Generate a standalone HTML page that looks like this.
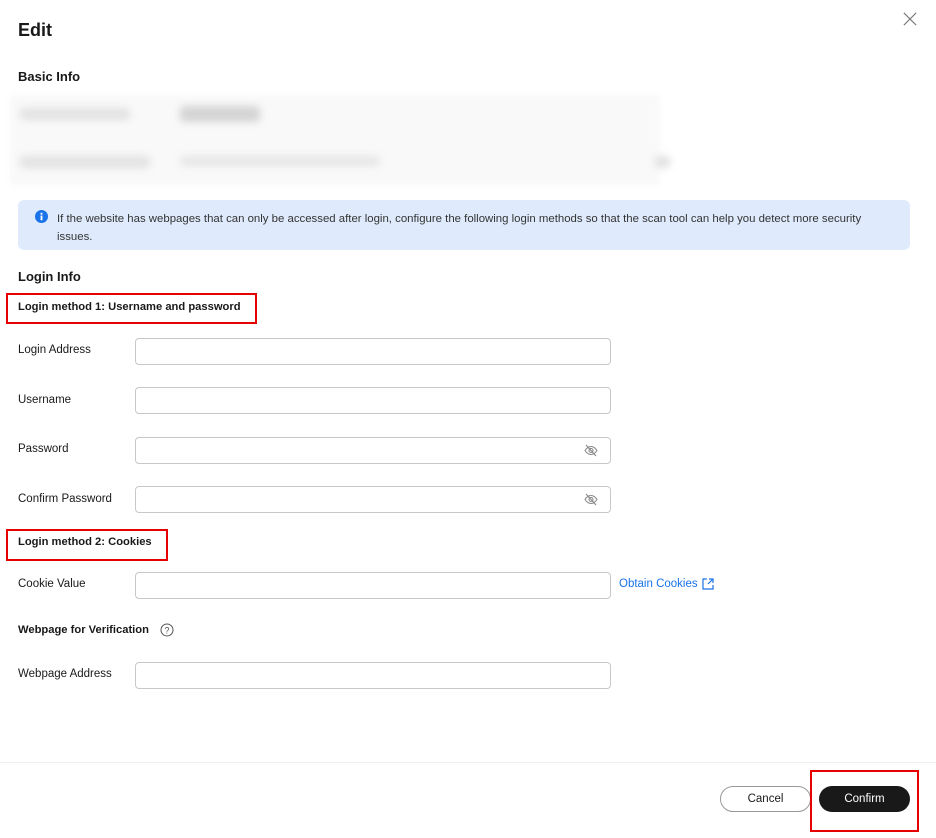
<!DOCTYPE html>
<html><head><style>
body{margin:0;width:936px;height:838px;background:#fff;font-family:"Liberation Sans",sans-serif;color:#191919;position:relative;overflow:hidden}
.a{position:absolute}
.t{font-size:11.5px}
.b{font-weight:bold}
.bt{font-size:11.2px;font-weight:bold}
.in{position:absolute;left:135px;width:474px;height:25px;border:1px solid #c8c8c8;border-radius:4px;background:#fff}
.red{position:absolute;border:2px solid #e60000}
.blur{position:absolute;background:#d8d8d8;filter:blur(4px);border-radius:4px}
.eye{position:absolute;right:12px;top:6px}
</style></head><body>
<div class="a b" style="left:18px;top:20px;font-size:18px">Edit</div>
<svg class="a" style="left:903px;top:12px" width="14" height="14" viewBox="0 0 16 16"><path d="M1 1L15 15M15 1L1 15" stroke="#777" stroke-width="1.4"/></svg>
<div class="a b" style="left:18px;top:69px;font-size:13px">Basic Info</div>
<div class="a" style="left:10px;top:95px;width:650px;height:90px;background:#f9f9f9;filter:blur(3px)"></div>
<div class="blur" style="left:20px;top:108px;width:110px;height:12px;background:#e2e2e2"></div>
<div class="blur" style="left:180px;top:106px;width:80px;height:16px;background:#d4d4d4"></div>
<div class="blur" style="left:20px;top:156px;width:130px;height:12px;background:#e2e2e2"></div>
<div class="blur" style="left:180px;top:156px;width:200px;height:10px;background:#e6e6e6"></div>
<div class="blur" style="left:655px;top:156px;width:15px;height:12px;background:#e0e0e0"></div>
<div class="a" style="left:18px;top:200px;width:892px;height:50px;background:#dfebfc;border-radius:6px"></div>
<svg class="a" style="left:35px;top:210px" width="13" height="13" viewBox="0 0 14 14"><circle cx="7" cy="7" r="7" fill="#1a73e8"/><rect x="6" y="6" width="2" height="5" fill="#fff"/><rect x="6" y="3" width="2" height="2" fill="#fff"/></svg>
<div class="a" style="left:57px;top:210px;width:840px;line-height:18px;font-size:11.4px;color:#333">If the website has webpages that can only be accessed after login, configure the following login methods so that the scan tool can help you detect more security issues.</div>
<div class="a b" style="left:18px;top:269px;font-size:13px">Login Info</div>
<div class="a bt" style="left:18px;top:301px">Login method 1: Username and password</div>
<div class="red" style="left:6px;top:293px;width:247px;height:27px"></div>
<div class="a t" style="left:18px;top:344px">Login Address</div><div class="in" style="top:338px"></div>
<div class="a t" style="left:18px;top:394px">Username</div><div class="in" style="top:387px"></div>
<div class="a t" style="left:18px;top:443px">Password</div><div class="in" style="top:437px"><svg class="eye" width="14" height="13" viewBox="0 0 14 13"><path d="M1 6.5C3 3.5 5 2.5 7 2.5S11 3.5 13 6.5C11 9.5 9 10.5 7 10.5S3 9.5 1 6.5Z" fill="none" stroke="#888" stroke-width="1.1"/><circle cx="7" cy="6.5" r="2" fill="none" stroke="#888" stroke-width="1.1"/><path d="M2 1L12 12" stroke="#888" stroke-width="1.1"/></svg></div>
<div class="a t" style="left:18px;top:493px">Confirm Password</div><div class="in" style="top:486px"><svg class="eye" width="14" height="13" viewBox="0 0 14 13"><path d="M1 6.5C3 3.5 5 2.5 7 2.5S11 3.5 13 6.5C11 9.5 9 10.5 7 10.5S3 9.5 1 6.5Z" fill="none" stroke="#888" stroke-width="1.1"/><circle cx="7" cy="6.5" r="2" fill="none" stroke="#888" stroke-width="1.1"/><path d="M2 1L12 12" stroke="#888" stroke-width="1.1"/></svg></div>
<div class="a bt" style="left:18px;top:536px">Login method 2: Cookies</div>
<div class="red" style="left:6px;top:529px;width:158px;height:28px"></div>
<div class="a t" style="left:18px;top:578px">Cookie Value</div><div class="in" style="top:572px"></div>
<div class="a t" style="left:619px;top:578px;color:#1a73e8">Obtain Cookies</div>
<svg class="a" style="left:702px;top:578px" width="12" height="12" viewBox="0 0 12 12"><path d="M5 1H1V11H11V7M7 1H11V5M11 1L6 6" fill="none" stroke="#1a73e8" stroke-width="1.2"/></svg>
<div class="a bt" style="left:18px;top:624px">Webpage for Verification</div>
<svg class="a" style="left:160px;top:623px" width="14" height="14" viewBox="0 0 14 14"><circle cx="7" cy="7" r="6" fill="none" stroke="#555" stroke-width="1"/><text x="7" y="10.5" font-size="9" text-anchor="middle" fill="#555" font-family="Liberation Sans">?</text></svg>
<div class="a t" style="left:18px;top:668px">Webpage Address</div><div class="in" style="top:662px"></div>
<div class="a" style="left:0;top:762px;width:936px;height:1px;background:#eee"></div>
<div class="a t" style="left:720px;top:786px;width:89px;height:24px;border:1px solid #999;border-radius:13px;text-align:center;line-height:24px">Cancel</div>
<div class="a t" style="left:819px;top:786px;width:91px;height:26px;background:#191919;color:#fff;border-radius:13px;text-align:center;line-height:26px">Confirm</div>
<div class="red" style="left:810px;top:770px;width:105px;height:58px"></div>
</body></html>
